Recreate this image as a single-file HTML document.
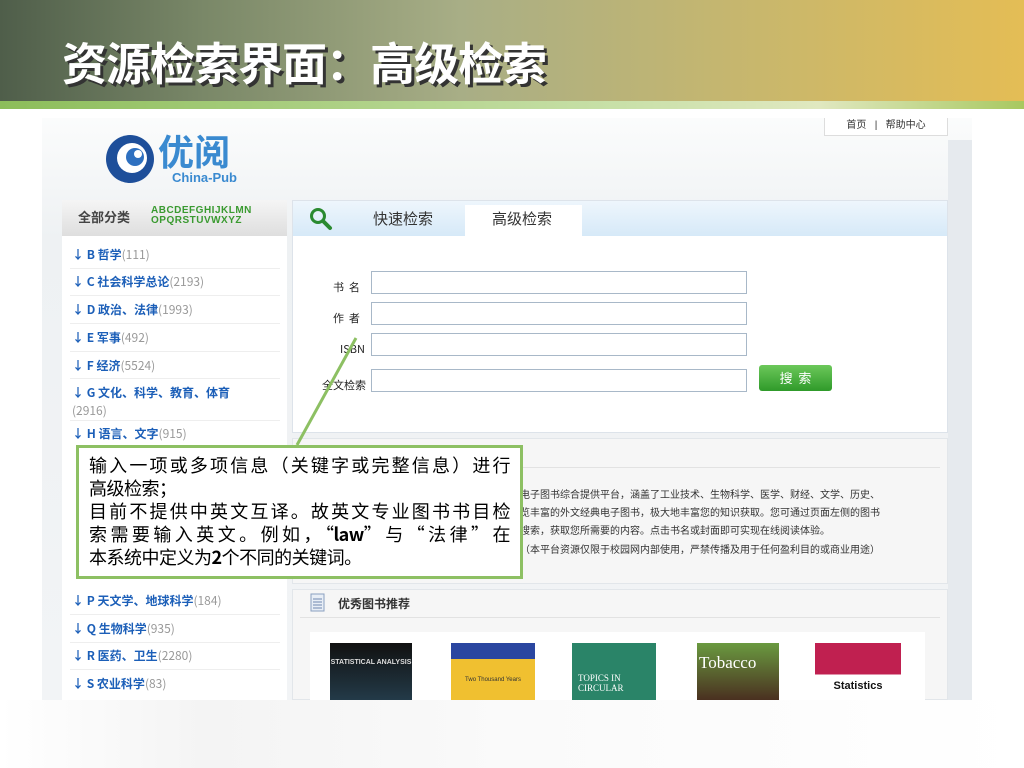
<!DOCTYPE html>
<html><head><meta charset="utf-8"><style>
*{margin:0;padding:0;box-sizing:border-box}
body{width:1024px;height:768px;overflow:hidden;background:#fff;font-family:"Liberation Sans","Noto Sans CJK SC",sans-serif;position:relative}
.a{position:absolute}
.hdr{left:0;top:0;width:1024px;height:101px;background:linear-gradient(90deg,#4f5e4a 0%,#7a8868 20%,#a8ae86 45%,#c4b670 70%,#e4bd55 100%)}
.stripe{left:0;top:101px;width:1024px;height:8px;background:linear-gradient(90deg,#8cbd5a,#c8e0a8 60%,#e0e8c0 80%,#a8c860)}
.title{left:62px;top:28px;font-size:45px;font-weight:bold;color:#fff;font-family:"Noto Sans CJK SC",sans-serif;text-shadow:3px 3px 0 #333;letter-spacing:-1px}
.shot{left:42px;top:118px;width:930px;height:582px;background:linear-gradient(180deg,#fbfcfc,#eef1f3 120px,#f2f4f6)}
.lp{left:62px;top:200px;width:225px;height:500px;background:#fff}
.lph{left:62px;top:200px;width:225px;height:36px;background:linear-gradient(#f5f5f5,#dedede)}
.it{left:72px;font-size:12px;color:#1c5fb8;font-weight:bold;font-family:"Noto Sans CJK SC",sans-serif}
.it span{color:#999;font-weight:normal}
.ln{left:70px;width:210px;height:1px;background:#eee}
.rp{left:292px;top:200px;width:656px;height:233px;background:#fff;border:1px solid #dde3ea}
.tab{left:293px;top:201px;width:654px;height:35px;background:linear-gradient(#eef6fc,#d6e9f8)}
.lab{font-size:11px;color:#222;font-family:"Noto Sans CJK SC",sans-serif}
.inp{left:371px;width:376px;height:23px;border:1px solid #a8b8c8;background:#fff}
.p2{left:292px;top:438px;width:656px;height:146px;background:#f6f6f6;border:1px solid #e2e6ea}
.p3{left:292px;top:589px;width:656px;height:111px;background:#f6f6f6;border:1px solid #e2e6ea}
.tx{left:520px;font-size:10px;color:#333;font-family:"Noto Sans CJK SC",sans-serif;white-space:nowrap}
.bk{top:643px;height:57px}
.call{left:76px;top:445px;width:447px;height:134px;background:#fff;border:3px solid #8dc063;padding:6px 10px;font-size:18px;line-height:23px;color:#000;font-family:"Noto Sans CJK SC",sans-serif}
.call div{text-align:justify;text-align-last:justify;white-space:nowrap;overflow:hidden;letter-spacing:-0.5px}
.call div.l{text-align-last:left}
</style></head><body>
<div class="a hdr"></div>
<div class="a stripe"></div>
<div class="a title">资源检索界面：高级检索</div>
<div class="a shot"></div>
<div class="a" style="left:948px;top:140px;width:24px;height:560px;background:#e6eaee"></div>
<div class="a" style="left:824px;top:118px;width:124px;height:18px;border:1px solid #ddd;border-top:none;background:#fff;font-size:10px;color:#333;text-align:center;line-height:16px">首页 &nbsp;&nbsp;|&nbsp;&nbsp; 帮助中心</div>
<svg class="a" style="left:104px;top:130px" width="52" height="56"><circle cx="26" cy="29" r="24" fill="#1e4f9a"/><circle cx="28" cy="28" r="15" fill="#fff"/><circle cx="31" cy="27" r="9" fill="#2e70c0"/><circle cx="34" cy="24" r="4" fill="#fff"/></svg>
<div class="a" style="left:158px;top:128px;font-size:36px;color:#3a8ad0;font-weight:bold;font-family:'Noto Sans CJK SC',sans-serif;line-height:44px">优阅</div>
<div class="a" style="left:172px;top:170px;font-size:13px;color:#3a8ad0;font-weight:bold">China-Pub</div>
<div class="a lp"></div><div class="a lph"></div>
<div class="a" style="left:78px;top:207px;font-size:13px;font-weight:bold;color:#444;font-family:'Noto Sans CJK SC',sans-serif">全部分类</div>
<div class="a" style="left:151px;top:206px;font-size:10px;font-weight:bold;color:#3a9a30;line-height:10px;letter-spacing:0.5px">ABCDEFGHIJKLMN<br>OPQRSTUVWXYZ</div>
<div class="a it" style="top:246px">↓ B 哲学<span>(111)</span></div><div class="a ln" style="top:268px"></div>
<div class="a it" style="top:273px">↓ C 社会科学总论<span>(2193)</span></div><div class="a ln" style="top:295px"></div>
<div class="a it" style="top:301px">↓ D 政治、法律<span>(1993)</span></div><div class="a ln" style="top:323px"></div>
<div class="a it" style="top:329px">↓ E 军事<span>(492)</span></div><div class="a ln" style="top:351px"></div>
<div class="a it" style="top:357px">↓ F 经济<span>(5524)</span></div><div class="a ln" style="top:378px"></div>
<div class="a it" style="top:384px;line-height:18px">↓ G 文化、科学、教育、体育<br><span>(2916)</span></div><div class="a ln" style="top:420px"></div>
<div class="a it" style="top:425px">↓ H 语言、文字<span>(915)</span></div>
<div class="a it" style="top:592px">↓ P 天文学、地球科学<span>(184)</span></div><div class="a ln" style="top:614px"></div>
<div class="a it" style="top:620px">↓ Q 生物科学<span>(935)</span></div><div class="a ln" style="top:642px"></div>
<div class="a it" style="top:647px">↓ R 医药、卫生<span>(2280)</span></div><div class="a ln" style="top:669px"></div>
<div class="a it" style="top:675px">↓ S 农业科学<span>(83)</span></div>
<div class="a rp"></div><div class="a tab"></div>
<div class="a" style="left:465px;top:205px;width:117px;height:32px;background:#fff"></div>
<svg class="a" style="left:309px;top:207px" width="24" height="24"><circle cx="9" cy="9" r="6.5" fill="none" stroke="#2a8a30" stroke-width="3"/><line x1="14" y1="14" x2="21" y2="21" stroke="#2a8a30" stroke-width="4" stroke-linecap="round"/></svg>
<div class="a" style="left:373px;top:208px;font-size:15px;color:#333;font-family:'Noto Sans CJK SC',sans-serif">快速检索</div>
<div class="a" style="left:492px;top:208px;font-size:15px;color:#333;font-family:'Noto Sans CJK SC',sans-serif">高级检索</div>
<div class="a lab" style="left:333px;top:279px">书 &nbsp;名</div><div class="a inp" style="top:271px"></div>
<div class="a lab" style="left:333px;top:310px">作 &nbsp;者</div><div class="a inp" style="top:302px"></div>
<div class="a lab" style="left:340px;top:341px">ISBN</div><div class="a inp" style="top:333px"></div>
<div class="a lab" style="left:322px;top:377px">全文检索</div><div class="a inp" style="top:369px"></div>
<div class="a" style="left:759px;top:365px;width:73px;height:26px;border-radius:3px;background:linear-gradient(#6cc85a,#2f9a2a);color:#fff;font-size:13px;text-align:center;line-height:26px;font-family:'Noto Sans CJK SC',sans-serif">搜 &nbsp;索</div>
<div class="a p2"></div>
<div class="a" style="left:300px;top:467px;width:640px;height:1px;background:#e2e2e2"></div>
<div class="a tx" style="top:486px">电子图书综合提供平台，涵盖了工业技术、生物科学、医学、财经、文学、历史、</div>
<div class="a tx" style="top:504px">览丰富的外文经典电子图书，极大地丰富您的知识获取。您可通过页面左侧的图书</div>
<div class="a tx" style="top:522px">搜索，获取您所需要的内容。点击书名或封面即可实现在线阅读体验。</div>
<div class="a tx" style="top:541px">（本平台资源仅限于校园网内部使用，严禁传播及用于任何盈利目的或商业用途）</div>
<div class="a p3"></div>
<div class="a" style="left:300px;top:617px;width:640px;height:1px;background:#e2e2e2"></div>
<svg class="a" style="left:310px;top:593px" width="16" height="20"><rect x="1" y="1" width="13" height="17" fill="#e8eef6" stroke="#8aa0c0"/><g stroke="#7088b0"><line x1="3" y1="6" x2="12" y2="6"/><line x1="3" y1="9" x2="12" y2="9"/><line x1="3" y1="12" x2="12" y2="12"/><line x1="3" y1="15" x2="12" y2="15"/></g></svg>
<div class="a" style="left:338px;top:595px;font-size:12px;font-weight:bold;color:#333;font-family:'Noto Sans CJK SC',sans-serif">优秀图书推荐</div>
<div class="a" style="left:310px;top:632px;width:615px;height:68px;background:#fff"></div>
<div class="a bk" style="left:330px;width:82px;background:linear-gradient(#111,#233a48);color:#ddd;font-size:7px;text-align:center;padding-top:16px;font-weight:bold">STATISTICAL ANALYSIS</div>
<div class="a bk" style="left:451px;width:84px;background:linear-gradient(#2a46a0 0 28%,#f0c030 28%);color:#333;font-size:6px;text-align:center;padding-top:34px">Two Thousand Years</div>
<div class="a bk" style="left:572px;width:84px;background:#2a8468;color:#fff;font-size:9px;padding:30px 0 0 6px;font-family:'Liberation Serif',serif">TOPICS IN<br>CIRCULAR</div>
<div class="a bk" style="left:697px;width:82px;background:linear-gradient(#6a9a40,#4a3020);color:#fff;font-size:17px;padding:10px 0 0 2px;font-family:'Liberation Serif',serif">Tobacco</div>
<div class="a bk" style="left:815px;width:86px;background:linear-gradient(#c02050 0 55%,#fff 55%);color:#111;font-size:11px;font-weight:bold;text-align:center;padding-top:37px">Statistics</div>
<svg class="a" style="left:0;top:0" width="1024" height="768"><line x1="297" y1="445" x2="356" y2="338" stroke="#8dc063" stroke-width="3"/></svg>
<div class="a call">
<div>输入一项或多项信息（关键字或完整信息）进行</div>
<div class="l">高级检索；</div>
<div>目前不提供中英文互译。故英文专业图书书目检</div>
<div>索需要输入英文。例如，“<b>law</b>”与“法律”在</div>
<div class="l">本系统中定义为<b>2</b>个不同的关键词。</div>
</div>
<div class="a" style="left:0;top:700px;width:1024px;height:68px;background:linear-gradient(90deg,#fff,#f4f4f4 20%,#fafafa 50%,#fff)"></div>
</body></html>
